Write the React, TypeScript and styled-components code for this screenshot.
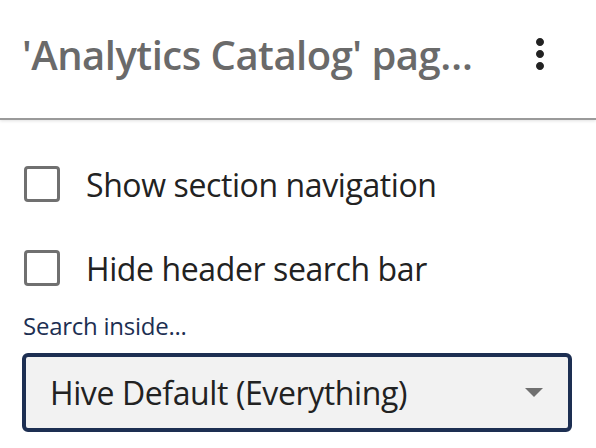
import React from 'react'
import styled, { createGlobalStyle } from 'styled-components'

const GlobalStyle = createGlobalStyle`
  html, body {
    margin: 0;
    padding: 0;
    background: #ffffff;
    font-family: 'Open Sans', 'Noto Sans', sans-serif;
  }
`

const Panel = styled.div`
  width: 596px;
  height: 448px;
  overflow: hidden;
  background: #ffffff;
`

const Header = styled.header`
  display: flex;
  align-items: center;
  box-sizing: border-box;
  height: 120px;
  padding: 0 32px 10px 22px;
  border-bottom: 2px solid #9a9a9a;
  box-shadow: 0 1px 3px rgba(0, 0, 0, 0.12);
`

const Title = styled.h1`
  flex: 1;
  min-width: 0;
  margin: 0 42px 0 0;
  font-size: 40px;
  font-weight: 600;
  letter-spacing: -0.5px;
  color: #6a6a6a;
  white-space: nowrap;
  overflow: hidden;
  text-overflow: ellipsis;
`

const MenuButton = styled.button`
  display: flex;
  padding: 0;
  border: none;
  background: none;
  color: #222222;
  cursor: pointer;
`

const Body = styled.div`
  display: flex;
  flex-direction: column;
  padding: 46px 24px 0 22px;
`

const CheckRow = styled.label<{ $gap?: number }>`
  display: flex;
  align-items: center;
  gap: 26px;
  height: 36px;
  margin-bottom: ${(p) => p.$gap ?? 0}px;
  padding-left: 2px;
  font-size: 32px;
  letter-spacing: -0.4px;
  color: #222222;
  cursor: pointer;
`

const Box = styled.input`
  appearance: none;
  box-sizing: border-box;
  width: 36px;
  height: 36px;
  margin: 0;
  border: 3px solid #707070;
  border-radius: 4px;
  background: #ffffff;
`

const FieldLabel = styled.div`
  margin-top: 23px;
  padding-left: 1px;
  font-size: 24px;
  letter-spacing: -0.25px;
  color: #1d2f52;
`

const Select = styled.div`
  display: flex;
  align-items: center;
  justify-content: space-between;
  box-sizing: border-box;
  width: 550px;
  height: 79px;
  margin-top: 11px;
  padding: 0 25px 0 24px;
  border: 4px solid #1d2f52;
  border-radius: 6px;
  background: #f2f2f2;
  font-size: 32px;
  letter-spacing: -0.4px;
  color: #222222;
`

const Arrow = styled.span`
  width: 0;
  height: 0;
  border-left: 9px solid transparent;
  border-right: 9px solid transparent;
  border-top: 9px solid #707070;
`

const App = (): JSX.Element => {
  return (
    <Panel>
      <GlobalStyle />
      <Header>
        <Title>'Analytics Catalog' page settings</Title>
        <MenuButton aria-label="More options">
          <svg width="48" height="48" viewBox="0 0 24 24" fill="currentColor">
            <path d="M12 8c1.1 0 2-.9 2-2s-.9-2-2-2-2 .9-2 2 .9 2 2 2zm0 2c-1.1 0-2 .9-2 2s.9 2 2 2 2-.9 2-2-.9-2-2-2zm0 6c-1.1 0-2 .9-2 2s.9 2 2 2 2-.9 2-2-.9-2-2-2z" />
          </svg>
        </MenuButton>
      </Header>
      <Body>
        <CheckRow $gap={48}>
          <Box type="checkbox" />
          Show section navigation
        </CheckRow>
        <CheckRow>
          <Box type="checkbox" />
          Hide header search bar
        </CheckRow>
        <FieldLabel>Search inside...</FieldLabel>
        <Select>
          Hive Default (Everything)
          <Arrow />
        </Select>
      </Body>
    </Panel>
  )
}

export default App
